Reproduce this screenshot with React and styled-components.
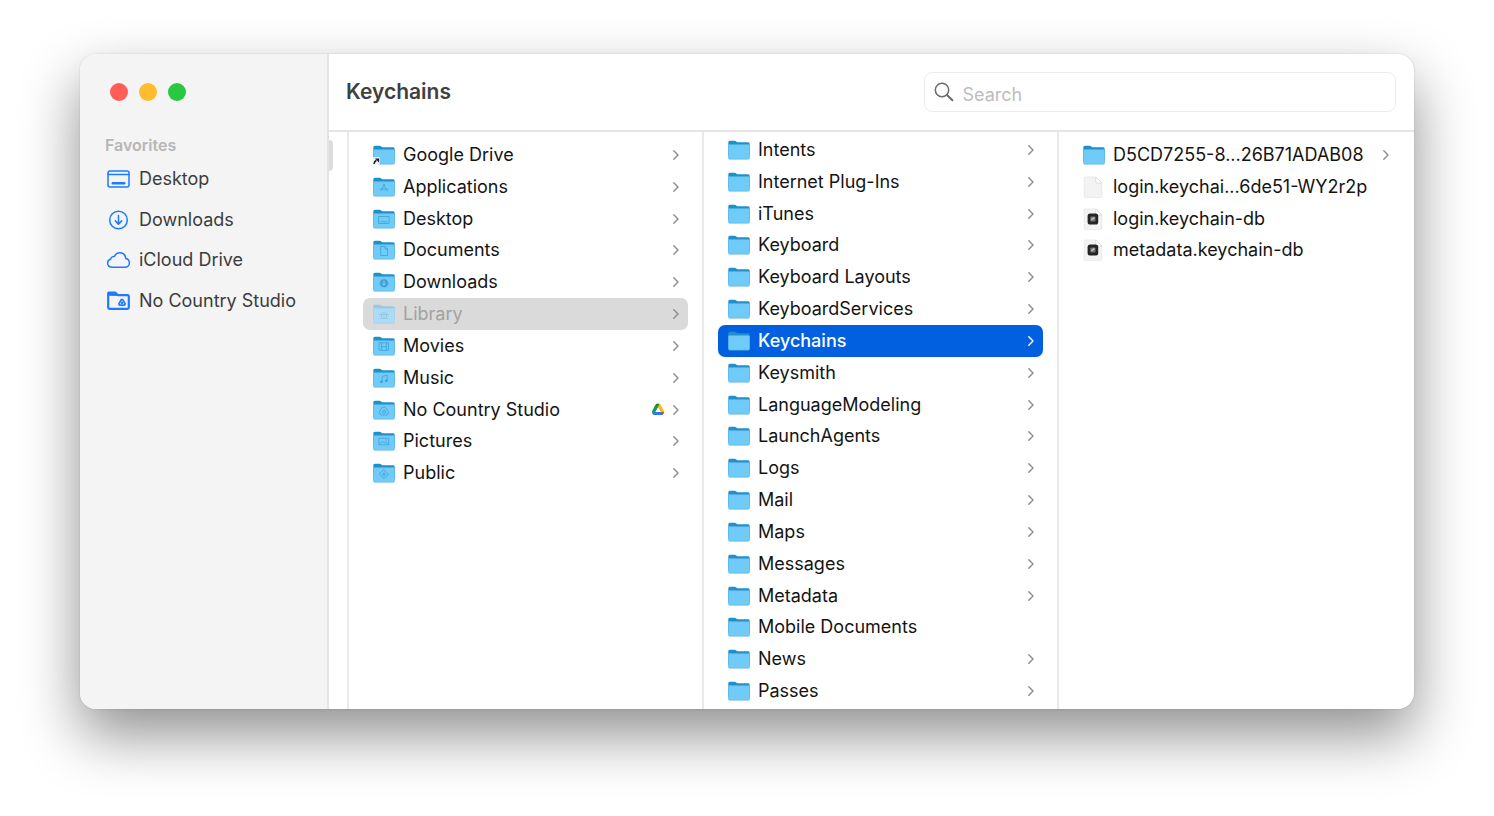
import React, { useState } from 'react';
import styled, { createGlobalStyle } from 'styled-components';

const GlobalStyle = createGlobalStyle`
  * {
    box-sizing: border-box;
  }

  body {
    margin: 0;
    background: #ffffff;
    font-family: Inter, "Liberation Sans", sans-serif;
    color: #141414;
  }
`;

const Page = styled.div`
  display: flex;
  min-height: 100vh;
  padding: 54px 80px 107px;
`;

const Window = styled.div`
  flex: 1;
  display: flex;
  min-width: 0;
  background: #ffffff;
  border-radius: 16px;
  overflow: hidden;
  box-shadow: 0 26px 58px rgba(0, 0, 0, 0.44), 0 0 2px rgba(0, 0, 0, 0.16);
`;

/* Sidebar */
const Sidebar = styled.aside`
  flex: none;
  width: 249px;
  padding: 29px 0 0 25px;
  background: #f4f4f4;
  border-right: 2px solid #e4e4e4;
`;

const Lights = styled.div`
  display: flex;
  gap: 11px;
  padding-left: 5px;
`;

const Light = styled.button`
  width: 18px;
  height: 18px;
  padding: 0;
  border: 0;
  border-radius: 50%;
  background: ${(props) => props.$color};
`;

const SideTitle = styled.h2`
  margin: 34px 0 4px;
  font-size: 16px;
  font-weight: 600;
  line-height: 20px;
  color: #b6b6b6;
`;

const SideList = styled.nav`
  display: grid;
  grid-template-rows: repeat(4, 1fr);
  height: 162px;
`;

const SideLink = styled.a`
  display: flex;
  align-items: center;
  gap: 8px;
  font-size: 18px;
  line-height: 24px;
  color: #3c3c3c;
  text-decoration: none;
  white-space: nowrap;

  svg {
    flex: none;
    margin-left: 1px;
  }
`;

/* Main area */
const Main = styled.main`
  flex: 1;
  display: flex;
  flex-direction: column;
  min-width: 0;
`;

const Header = styled.header`
  display: flex;
  align-items: center;
  justify-content: space-between;
  height: 78px;
  padding: 0 18px 0 17px;
  border-bottom: 2px solid #e6e6e6;
`;

const Title = styled.h1`
  margin: 0;
  font-size: 21px;
  font-weight: 600;
  line-height: 28px;
  color: #404040;
`;

const SearchBox = styled.label`
  display: flex;
  align-items: center;
  gap: 9px;
  width: 45%;
  height: 40px;
  padding: 0 9px;
  border: 1px solid #ececec;
  border-radius: 8px;
`;

const SearchInput = styled.input`
  flex: 1;
  min-width: 0;
  height: 36px;
  padding: 4px 0 0;
  border: 0;
  outline: none;
  background: none;
  font: inherit;
  font-size: 18px;

  &::placeholder {
    color: #bdbdbd;
    opacity: 1;
  }
`;

const Browser = styled.div`
  flex: 1;
  display: flex;
`;

const Gutter = styled.div`
  flex: none;
  width: 20px;
  padding-top: 8px;
  border-right: 2px solid #e9e9e9;
`;

const Thumb = styled.div`
  width: 4px;
  height: 31px;
  border-radius: 0 5px 5px 0;
  background: #dcdcdc;
`;

const Columns = styled.div`
  flex: 1;
  display: grid;
  grid-template-columns: repeat(3, minmax(0, 1fr));
`;

const Column = styled.section`
  padding: ${(props) => (props.$scrolled ? 2 : 7)}px 14px 0;
  border-right: 2px solid #e9e9e9;

  &:last-child {
    border-color: transparent;
  }
`;

/* tall enough for the 18 rows that fit in the window */
const List = styled.ul`
  display: grid;
  grid-template-rows: repeat(18, 1fr);
  height: 573px;
  margin: 0 0 -6px;
  padding: 0;
  list-style: none;
`;

const Row = styled.button`
  display: flex;
  align-items: center;
  width: 100%;
  height: 100%;
  padding: 0 8px 0 10px;
  border: 0;
  border-radius: 7px;
  font: inherit;
  font-size: 18px;
  line-height: 24px;
  font-weight: ${(props) => (props.$state === 'active' ? 500 : 400)};
  color: ${(props) =>
    props.$state === 'active' ? '#ffffff' : props.$state === 'dimmed' ? '#a2a2a2' : '#141414'};
  background: ${(props) =>
    props.$state === 'active' ? '#0060df' : props.$state === 'dimmed' ? '#dadada' : 'none'};
  white-space: nowrap;
  text-align: left;

  svg {
    flex: none;
  }

  .chevron {
    color: ${(props) => (props.$state === 'active' ? '#ffffff' : '#8c8c8c')};
  }
`;

const Name = styled.span`
  flex: 1;
  min-width: 0;
  margin-left: 8px;
`;

const Badge = styled.span`
  display: flex;
  margin-right: 7px;
`;

/* small drawings pressed into the folder fronts */
const glyphs = {
  apps: <path d="M11.6 7.2l-3.6 6.6M10.4 7.2l3.6 6.6M7 12h8" />,
  desktop: <path d="M6 7.5h10v7H6zM8 12.8h6" />,
  document: <path d="M8 6.5h4l2.5 2.5v6.5H8zM12 6.5V9h2.5" />,
  download: (
    <>
      <circle cx="11" cy="11.2" r="3.8" fill="#3c9fd8" />
      <path d="M11 9v4M9.4 11.6l1.6 1.6 1.6-1.6" stroke="#8ad6fb" />
    </>
  ),
  library: <path d="M7 10.5h8M7.5 14.5h7M8.5 10.5v4M11 10.5v4M13.5 10.5v4M7 10.5L11 8l4 2.5" />,
  movie: <path d="M6.5 6.8h9v7.6h-9zM8.6 6.8v7.6M13.4 6.8v7.6M8.6 10.6h4.8" />,
  music: (
    <>
      <path d="M9.2 13.6V8.4l5-1.2v5.2" />
      <circle cx="8.2" cy="13.8" r="1" fill="#3292cc" />
      <circle cx="13.2" cy="12.8" r="1" fill="#3292cc" />
    </>
  ),
  drive: <path d="M9.6 7.2h2.8l3.2 5.4-1.3 2.3H7.7l-1.3-2.3zM11 10l-1.6 2.8h3.2z" />,
  picture: <path d="M6.3 7.2h9.4v6.6H6.3zM6.8 13.2l2.6-3 2 2 1.6-1.4 2.4 2.4M12.6 9h.6" />,
  shared: <path d="M11 6.8l4.4 4.4-4.4 4.4-4.4-4.4zM11 9.2v4M9.4 11.2h3.2" />,
};

const Folder = ({ glyph, faded }) => (
  <svg width="22" height="20" viewBox="0 0 22 20" aria-hidden="true">
    <path
      d="M.3 2.2Q.3.7 1.8.7h4.8q.9 0 1.4.6l.5.5q.4.4 1 .4h10.7q1.5 0 1.5 1.5V16H.3z"
      fill={faded ? '#95c9e4' : '#2090cc'}
    />
    <path d="M.3 5h21.4v13q0 1.6-1.5 1.6H1.8Q.3 19.6.3 18z" fill={faded ? '#a0cfe7' : '#53b0de'} />
    <path d="M.6 5.4h20.8v12q0 1.3-1.2 1.3H1.8q-1.2 0-1.2-1.3z" fill={faded ? '#abdcf5' : '#71cbf9'} />
    <path d="M.6 5h20.8" stroke={faded ? '#b8e4f8' : '#8bdafc'} strokeWidth=".8" />
    {glyph === 'alias' ? (
      <>
        <path d="M0 12h6.5v8H0z" fill="#eef3f5" />
        <path d="M1 18.8c.2-1.6 1-2.8 2.4-3.6" stroke="#1d1d1d" strokeWidth="1.6" fill="none" />
        <path d="M2 13.4h4v4z" fill="#1d1d1d" />
      </>
    ) : (
      <g
        fill="none"
        stroke={faded ? '#92c6e2' : '#45a5da'}
        strokeWidth=".9"
        strokeLinejoin="round"
        strokeLinecap="round"
      >
        {glyphs[glyph]}
      </g>
    )}
  </svg>
);

const FileIcon = ({ keychain }) => (
  <svg width="22" height="24" viewBox="0 0 22 24" aria-hidden="true">
    <path d="M1.2 3q0-1 1-1h10.6l6 6v13.6q0 1-1 1H2.2q-1 0-1-1z" fill="#f3f3f3" stroke="#e4e4e4" strokeWidth=".7" />
    <path d="M12.8 2v5q0 1 1 1h5z" fill="#ffffff" stroke="#d2d2d2" strokeWidth=".7" />
    {keychain && (
      <>
        <rect x="4.6" y="6.6" width="10.6" height="11" rx="2.6" fill="#242424" />
        <rect x="7.3" y="9.4" width="5.2" height="5.2" rx="1" fill="#777" />
        <path d="M8.5 12.8l2.8-2.2" stroke="#d8d8d8" strokeWidth="1.2" />
      </>
    )}
  </svg>
);

const DriveBadge = () => (
  <svg width="14" height="13" viewBox="0 0 14 13" aria-hidden="true">
    <path d="M5 1.2L1.4 8.2 3 11.2 7.6 3.6 6.2 1z" fill="#0f9d45" />
    <path d="M1.2 8.4q-.4.8 0 1.5l.8 1.4 2-3.4L6 4.4 4.4 1.8z" fill="#0f9d45" />
    <path d="M5.6.8h2.8q.7 0 1.1.7l3.4 6.4q.4.7.2 1.3H9.8L5.2 1z" fill="#fbbc04" />
    <path d="M4.6 1.5Q5 .8 5.8.8h2.4L7 3.8z" fill="#188038" />
    <path d="M1.2 9h11.9q0 .5-.3.9l-.9 1.6q-.4.6-1.1.6H3.4q-.7 0-1.1-.6l-.8-1.4z" fill="#2b78f0" />
    <path d="M9.8 9h3.4l-1.4 2.4z" fill="#ea4335" />
    <path d="M7 4.9L9.5 9h-5z" fill="#ffffff" />
  </svg>
);

const Chevron = () => (
  <svg className="chevron" width="8" height="12" viewBox="0 0 8 12" aria-hidden="true">
    <path d="M1.8 1.8L6 6l-4.2 4.2" fill="none" stroke="currentColor" strokeWidth="1.4" strokeLinecap="round" strokeLinejoin="round" />
  </svg>
);

const SideIcon = ({ kind }) => (
  <svg width="25" height="24" viewBox="0 0 25 24" fill="none" stroke="#1b7cff" strokeWidth="1.5" strokeLinecap="round" strokeLinejoin="round" aria-hidden="true">
    {kind === 'desktop' && (
      <>
        <rect x="2" y="4" width="21" height="16" rx="2" />
        <path d="M2 7.4h21" />
        <path d="M6.8 16.2h11.4" strokeWidth="2.4" />
      </>
    )}
    {kind === 'download' && (
      <>
        <circle cx="12.5" cy="12" r="8.8" />
        <path d="M12.5 7.5v8.4M9.3 12.9l3.2 3.2 3.2-3.2" />
      </>
    )}
    {kind === 'cloud' && (
      <path d="M6.4 19.2c-2.9 0-4.8-1.8-4.8-4.2 0-2 1.3-3.5 3.2-4 .2-1.7 1.8-2.8 3.6-2.5 1.1-2.4 3-3.7 5.4-3.7 3.2 0 5.6 2.3 6 5.6 2.1.4 3.6 2 3.6 4.3 0 2.6-1.9 4.5-4.4 4.5z" />
    )}
    {kind === 'folder' && (
      <>
        <path d="M2.2 6.5v12.1q0 1.3 1.3 1.3h18q1.3 0 1.3-1.3V7.4q0-1.3-1.3-1.3H12" strokeWidth="2.2" />
        <path d="M1.1 6.8V4.2q0-1.6 1.6-1.6h6.8L12.3 5v2z" fill="#1b7cff" stroke="none" />
        <path d="M15.2 10.6h1.6l2.4 4.2-.7 1.4h-5l-.7-1.4zM16 13.2l-.5.9h1z" strokeWidth="1.7" />
      </>
    )}
  </svg>
);

const SearchIcon = () => (
  <svg width="20" height="20" viewBox="0 0 20 20" fill="none" stroke="#6a6a6a" strokeLinecap="round" aria-hidden="true">
    <circle cx="8" cy="8" r="6.7" strokeWidth="1.5" />
    <path d="M13 13l5.4 5.2" strokeWidth="2" />
  </svg>
);

const lights = [
  { label: 'Close', color: '#ff5f57' },
  { label: 'Minimize', color: '#febc2e' },
  { label: 'Zoom', color: '#28c840' },
];

const favorites = [
  { name: 'Desktop', icon: 'desktop' },
  { name: 'Downloads', icon: 'download' },
  { name: 'iCloud Drive', icon: 'cloud' },
  { name: 'No Country Studio', icon: 'folder' },
];

const home = [
  { name: 'Google Drive', glyph: 'alias' },
  { name: 'Applications', glyph: 'apps' },
  { name: 'Desktop', glyph: 'desktop' },
  { name: 'Documents', glyph: 'document' },
  { name: 'Downloads', glyph: 'download' },
  { name: 'Library', glyph: 'library', state: 'dimmed' },
  { name: 'Movies', glyph: 'movie' },
  { name: 'Music', glyph: 'music' },
  { name: 'No Country Studio', glyph: 'drive', badge: true },
  { name: 'Pictures', glyph: 'picture' },
  { name: 'Public', glyph: 'shared' },
];

const library = [
  'Intents',
  'Internet Plug-Ins',
  'iTunes',
  'Keyboard',
  'Keyboard Layouts',
  'KeyboardServices',
  'Keychains',
  'Keysmith',
  'LanguageModeling',
  'LaunchAgents',
  'Logs',
  'Mail',
  'Maps',
  'Messages',
  'Metadata',
  'Mobile Documents',
  'News',
  'Passes',
];

const keychains = [
  { name: 'D5CD7255-8...26B71ADAB08' },
  { name: 'login.keychai...6de51-WY2r2p', file: 'plain' },
  { name: 'login.keychain-db', file: 'keychain' },
  { name: 'metadata.keychain-db', file: 'keychain' },
];

function Item({ item, onClick }) {
  return (
    <li>
      <Row type="button" $state={item.state} onClick={onClick}>
        {item.file ? (
          <FileIcon keychain={item.file === 'keychain'} />
        ) : (
          <Folder glyph={item.glyph} faded={item.state === 'dimmed'} />
        )}
        <Name>{item.name}</Name>
        {item.badge && (
          <Badge>
            <DriveBadge />
          </Badge>
        )}
        {!item.file && !item.leaf && <Chevron />}
      </Row>
    </li>
  );
}

function App() {
  const [selected, setSelected] = useState('Keychains');
  const [query, setQuery] = useState('');

  return (
    <Page>
      <GlobalStyle />
      <Window>
        <Sidebar>
          <Lights>
            {lights.map((light) => (
              <Light key={light.label} type="button" aria-label={light.label} $color={light.color} />
            ))}
          </Lights>
          <SideTitle>Favorites</SideTitle>
          <SideList>
            {favorites.map((fav) => (
              <SideLink key={fav.name} href="#">
                <SideIcon kind={fav.icon} />
                {fav.name}
              </SideLink>
            ))}
          </SideList>
        </Sidebar>

        <Main>
          <Header>
            <Title>{selected}</Title>
            <SearchBox>
              <SearchIcon />
              <SearchInput
                type="text"
                aria-label="Search"
                placeholder="Search"
                value={query}
                onChange={(e) => setQuery(e.target.value)}
              />
            </SearchBox>
          </Header>

          <Browser>
            <Gutter>
              <Thumb />
            </Gutter>
            <Columns>
              <Column>
                <List>
                  {home.map((item) => (
                    <Item key={item.name} item={item} />
                  ))}
                </List>
              </Column>
              <Column $scrolled>
                <List>
                  {library.map((name) => (
                    <Item
                      key={name}
                      item={{
                        name,
                        leaf: name === 'Mobile Documents',
                        state: name === selected ? 'active' : undefined,
                      }}
                      onClick={() => setSelected(name)}
                    />
                  ))}
                </List>
              </Column>
              <Column>
                <List>
                  {keychains.map((item) => (
                    <Item key={item.name} item={item} />
                  ))}
                </List>
              </Column>
            </Columns>
          </Browser>
        </Main>
      </Window>
    </Page>
  );
}

export default App;
